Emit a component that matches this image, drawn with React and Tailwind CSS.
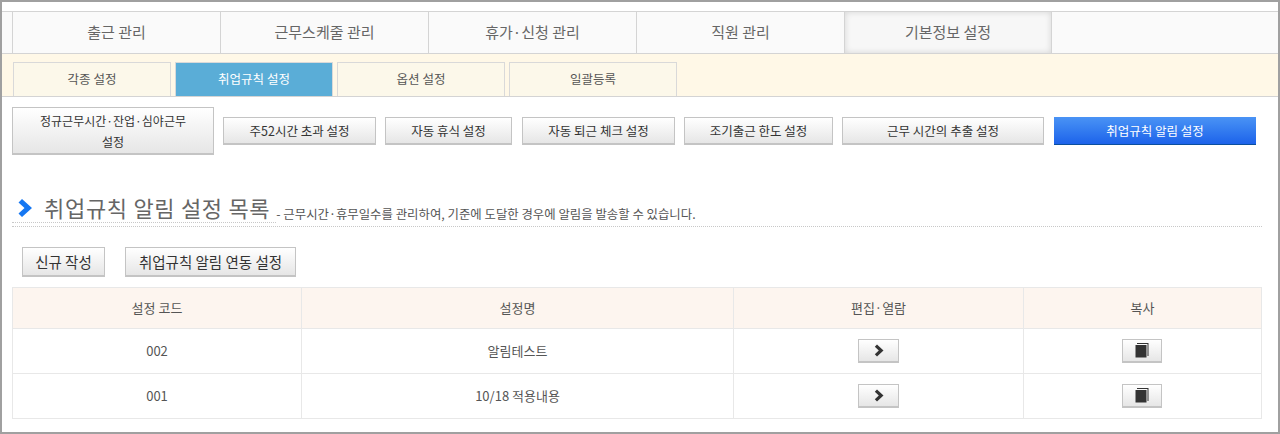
import React from 'react';

const mainTabs = ['출근 관리', '근무스케줄 관리', '휴가·신청 관리', '직원 관리', '기본정보 설정'];
const subTabs = [
  { label: '각종 설정', width: 'w-[158px]' },
  { label: '취업규칙 설정', width: 'w-[158px]', active: true },
  { label: '옵션 설정', width: 'w-[168px]' },
  { label: '일괄등록', width: 'w-[168px]' },
];
const ruleButtons = [
  { label: '자동 휴식 설정', width: 'w-[127px]', margin: 'ml-[9px]' },
  { label: '자동 퇴근 체크 설정', width: 'w-[153px]', margin: 'ml-[10px]' },
  { label: '조기출근 한도 설정', width: 'w-[149px]', margin: 'ml-[9px]' },
  { label: '근무 시간의 추출 설정', width: 'w-[202px]', margin: 'ml-[9px]' },
];
const rows = [
  { code: '002', name: '알림테스트' },
  { code: '001', name: '10/18 적용내용' },
];

const greyButton =
  'border border-[#c4c4c4] border-b-2 bg-gradient-to-b from-white to-[#e6e6e6] text-[#333]';

function ChevronIcon() {
  return (
    <svg width="10" height="13" viewBox="0 0 10 13">
      <path d="M3 0.5 L9.5 6.5 L3 12.5 L0.8 10.3 L4.8 6.5 L0.8 2.7 Z" fill="#333" />
    </svg>
  );
}

function BookIcon() {
  return (
    <svg width="14" height="15" viewBox="0 0 14 15">
      <path d="M2 0 H13.5 V13 H12.5 V1 H2 Z" fill="#333" />
      <path d="M0.5 2 H11.5 V14.5 H0.5 Z" fill="#333" />
    </svg>
  );
}

export default function App() {
  return (
    <div className="h-[434px] w-[1280px] overflow-hidden border-2 border-[#a0a0a0] bg-white font-['Noto_Sans_CJK_KR','Liberation_Sans',sans-serif]">
      {/* main tabs */}
      <div className="mt-[9px] flex h-[43px] border-y border-[#d4d4d4] bg-[#fafafa] pl-[10px] text-[15px] text-[#666]">
        {mainTabs.map((tab, i) => (
          <div
            key={tab}
            className={`flex w-[208px] items-center justify-center border-l border-[#d4d4d4] ${
              i === 4 ? 'border-r bg-[#f7f7f7] shadow-[inset_0_0_6px_rgba(0,0,0,0.14)]' : ''
            }`}
          >
            {tab}
          </div>
        ))}
      </div>

      {/* sub tabs */}
      <div className="flex h-[43px] items-end gap-1 border-b border-[#d4d4d4] bg-[#fff8e7] pl-[11px] text-[12.5px] text-[#555]">
        {subTabs.map((tab) => (
          <div
            key={tab.label}
            className={`flex h-[34px] items-center justify-center border border-b-0 border-[#d9d9d9] ${tab.width} ${
              tab.active ? 'border-[#c9dbe6] bg-[#5aadd7] text-white' : 'bg-[#fcf8ea]'
            }`}
          >
            {tab.label}
          </div>
        ))}
      </div>

      {/* rule buttons */}
      <div className="mt-[10px] flex items-center pl-[10px] text-[12.5px]">
        <div className={`flex h-[48px] w-[202px] items-center justify-center text-center text-[12px] leading-[21px] ${greyButton}`}>
          <span>
            정규근무시간·잔업·심야근무
            <br />
            설정
          </span>
        </div>
        <div className={`ml-[9px] flex h-[28px] w-[153px] items-center justify-center pt-px ${greyButton}`}>
          주52시간 초과 설정
        </div>
        {ruleButtons.map((btn) => (
          <div key={btn.label} className={`flex h-[28px] items-center justify-center pt-px ${btn.width} ${btn.margin} ${greyButton}`}>
            {btn.label}
          </div>
        ))}
        <div className="ml-[10px] flex h-[28px] w-[202px] items-center justify-center border-b border-[#0b4f9e] bg-gradient-to-b from-[#4a93f5] to-[#1d62ea] pt-px text-white">
          취업규칙 알림 설정
        </div>
      </div>

      {/* heading */}
      <div className="mx-[10px] mt-[32px] flex h-[40px] w-[1250px] items-end border-b border-dotted border-[#c8c8c8] pb-[3px]">
        <div className="flex items-end border-b border-dotted border-[#c8c8c8] pr-[6px]">
          <svg className="mb-[5px] ml-[6px]" width="14" height="18" viewBox="0 0 14 18">
            <path d="M4 0 L14 9 L4 18 L0.5 14.5 L6.5 9 L0.5 3.5 Z" fill="#1577f2" />
          </svg>
          <h1 className="ml-[12px] text-[22px] leading-[30px] font-normal tracking-[0.7px] text-[#666]">취업규칙 알림 설정 목록</h1>
        </div>
        <span className="text-[12.4px] leading-[18px] text-[#555]">
          - 근무시간·휴무일수를 관리하여, 기준에 도달한 경우에 알림을 발송할 수 있습니다.
        </span>
      </div>

      {/* actions */}
      <div className="mt-[20px] flex gap-5 pl-[20px] text-[14.5px]">
        <div className={`flex h-[30px] w-[83px] items-center justify-center ${greyButton}`}>신규 작성</div>
        <div className={`flex h-[30px] w-[171px] items-center justify-center ${greyButton}`}>취업규칙 알림 연동 설정</div>
      </div>

      {/* list */}
      <table className="mt-[10px] ml-[10px] w-[1250px] table-fixed border-collapse text-[13px] text-[#555]">
        <colgroup>
          <col className="w-[289px]" />
          <col className="w-[432px]" />
          <col className="w-[290px]" />
          <col />
        </colgroup>
        <thead>
          <tr className="h-[41px] bg-[#fdf5ef]">
            {['설정 코드', '설정명', '편집·열람', '복사'].map((h) => (
              <th key={h} className="border border-[#e8e8e8] font-normal">{h}</th>
            ))}
          </tr>
        </thead>
        <tbody>
          {rows.map((row) => (
            <tr key={row.code} className="h-[45px] text-center">
              <td className="border border-[#e8e8e8]">{row.code}</td>
              <td className="border border-[#e8e8e8]">{row.name}</td>
              <td className="border border-[#e8e8e8]">
                <div className={`mx-auto flex h-[24px] w-[41px] items-center justify-center ${greyButton}`}>
                  <ChevronIcon />
                </div>
              </td>
              <td className="border border-[#e8e8e8]">
                <div className={`ml-[98px] flex h-[24px] w-[40px] items-center justify-center ${greyButton}`}>
                  <BookIcon />
                </div>
              </td>
            </tr>
          ))}
        </tbody>
      </table>
    </div>
  );
}
